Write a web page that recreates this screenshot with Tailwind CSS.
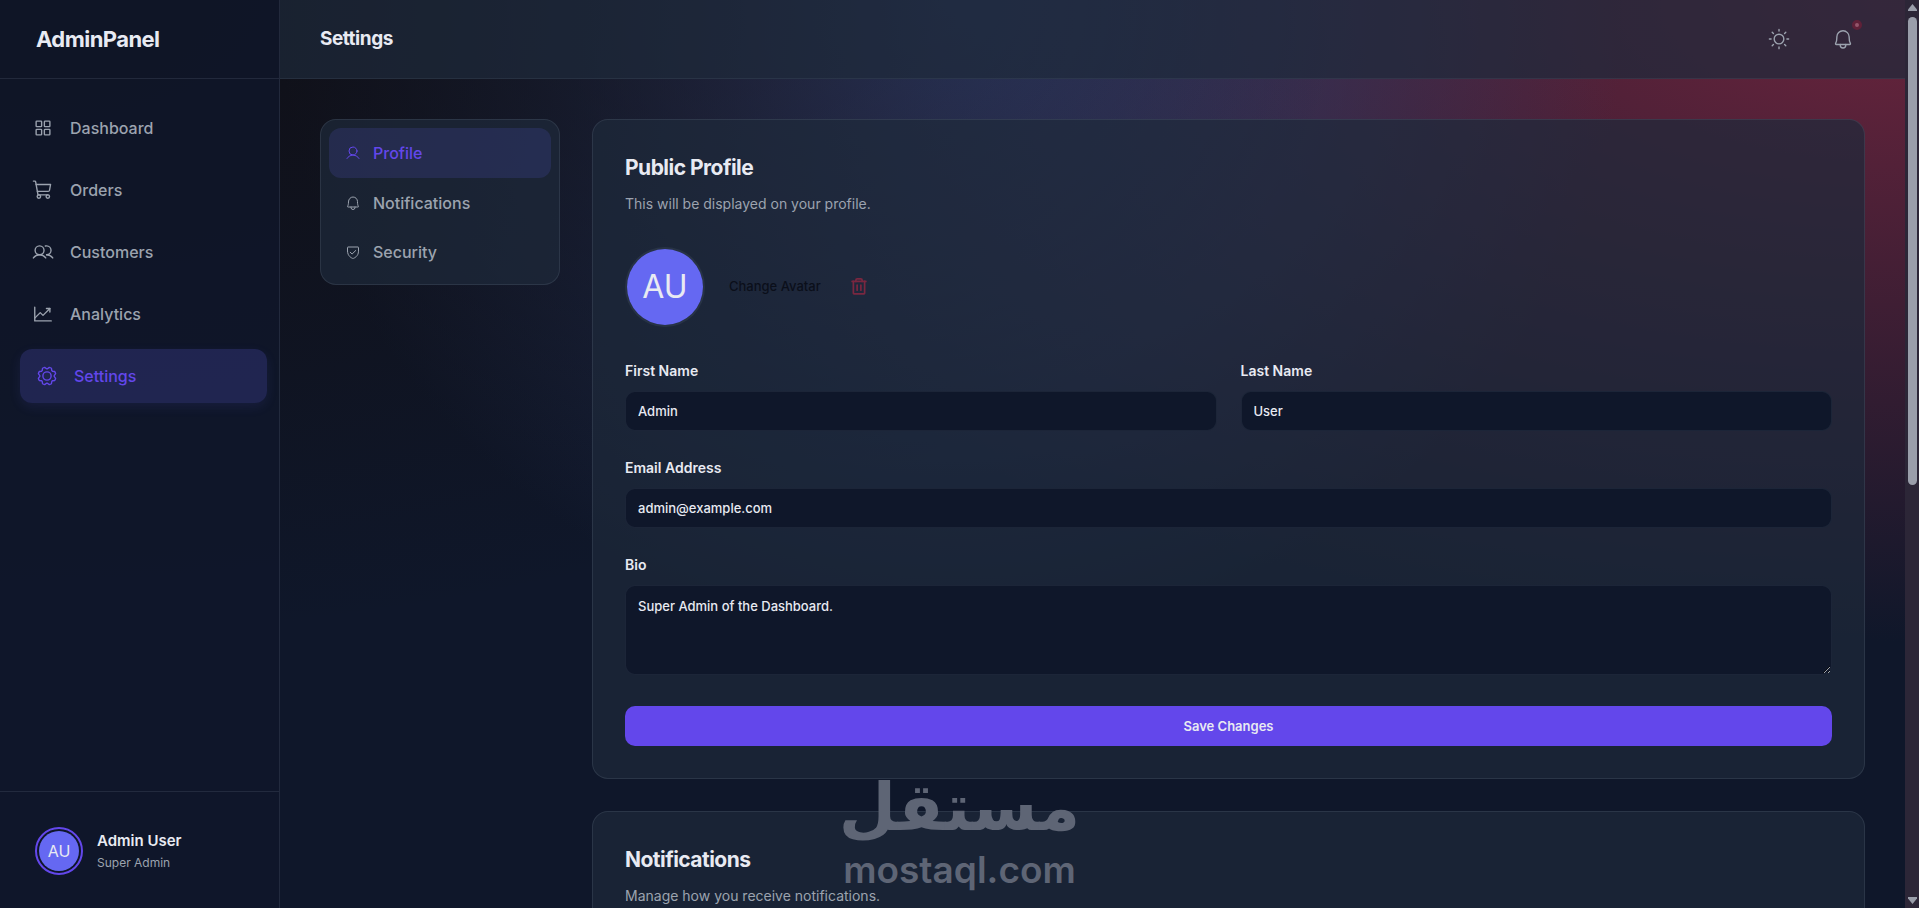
<!DOCTYPE html>
<html lang="en">
<head>
    <meta charset="UTF-8">
    <meta name="viewport" content="width=device-width, initial-scale=1.0">
    <script src="https://cdn.jsdelivr.net/npm/@tailwindcss/browser@4"></script>
    <title>AdminPanel - Settings</title>
</head>
<body class="h-screen overflow-hidden flex bg-[#0f172a] text-[#e8eaf2] font-['Inter',sans-serif]">
    <!-- icon sprite -->
    <svg class="hidden">
        <symbol id="i-grid" viewBox="0 0 256 256">
            <rect x="48" y="48" width="64" height="64" rx="8"/><rect x="144" y="48" width="64" height="64" rx="8"/>
            <rect x="48" y="144" width="64" height="64" rx="8"/><rect x="144" y="144" width="64" height="64" rx="8"/>
        </symbol>
        <symbol id="i-cart" viewBox="0 0 256 256">
            <path d="M184,184H69.8L41.9,30.6A8,8,0,0,0,34.1,24H16"/>
            <circle cx="80" cy="204" r="20"/><circle cx="184" cy="204" r="20"/>
            <path d="M62.5,144H188.1a15.9,15.9,0,0,0,15.7-13.1L216,64H48"/>
        </symbol>
        <symbol id="i-users" viewBox="0 0 256 256">
            <circle cx="88" cy="108" r="52"/>
            <path d="M155.4,57.9A54.5,54.5,0,0,1,169.5,56a52,52,0,0,1,0,104"/>
            <path d="M16,197.4a88,88,0,0,1,144,0"/><path d="M169.5,160a87.9,87.9,0,0,1,72,37.4"/>
        </symbol>
        <symbol id="i-chart" viewBox="0 0 256 256">
            <polyline points="224 208 32 208 32 48"/><polyline points="208 64 128 144 96 112 32 176"/><polyline points="208 104 208 64 168 64"/>
        </symbol>
        <symbol id="i-gear" viewBox="0 0 256 256">
            <circle cx="128" cy="128" r="48"/>
            <path d="M183.7,65.1q3.8,3.5,7.2,7.2l27.3,3.9a103.2,103.2,0,0,1,10.2,24.6l-16.6,22.1s.3,6.8,0,10.2l16.6,22.1a102.2,102.2,0,0,1-10.2,24.6l-27.3,3.9s-4.7,4.9-7.2,7.2l-3.9,27.3a103.2,103.2,0,0,1-24.6,10.2l-22.1-16.6a57.9,57.9,0,0,1-10.2,0l-22.1,16.6a102.2,102.2,0,0,1-24.6-10.2l-3.9-27.3q-3.7-3.5-7.2-7.2l-27.3-3.9a103.2,103.2,0,0,1-10.2-24.6l16.6-22.1s-.3-6.8,0-10.2L27.6,100.8A102.2,102.2,0,0,1,37.8,76.2l27.3-3.9q3.5-3.7,7.2-7.2L76.2,37.8a103.2,103.2,0,0,1,24.6-10.2l22.1,16.6a57.9,57.9,0,0,1,10.2,0l22.1-16.6a102.2,102.2,0,0,1,24.6,10.2Z"/>
        </symbol>
        <symbol id="i-user" viewBox="0 0 256 256">
            <circle cx="128" cy="96" r="64"/><path d="M31,216a112,112,0,0,1,194,0"/>
        </symbol>
        <symbol id="i-bell" viewBox="0 0 256 256">
            <path d="M56.2,104a71.9,71.9,0,0,1,72.3-72c39.6.3,71.3,33.2,71.3,72.9V112c0,35.8,7.5,56.6,14.1,68a8,8,0,0,1-6.9,12H49a8,8,0,0,1-6.9-12c6.6-11.4,14.1-32.2,14.1-68Z"/>
            <path d="M96,192v8a32,32,0,0,0,64,0v-8"/>
        </symbol>
        <symbol id="i-shield" viewBox="0 0 256 256">
            <path d="M40,114.7V56a8,8,0,0,1,8-8H208a8,8,0,0,1,8,8v58.7c0,84-71.3,111.8-85.5,116.5a7.2,7.2,0,0,1-5,0C111.3,226.5,40,198.7,40,114.7Z"/>
            <polyline points="172 104 113.3 160 84 132"/>
        </symbol>
        <symbol id="i-trash" viewBox="0 0 256 256">
            <path d="M216,56H40M104,104v64M152,104v64"/>
            <path d="M200,56V208a8,8,0,0,1-8,8H64a8,8,0,0,1-8-8V56"/>
            <path d="M168,56V40a16,16,0,0,0-16-16H104A16,16,0,0,0,88,40V56"/>
        </symbol>
        <symbol id="i-sun" viewBox="0 0 256 256">
            <circle cx="128" cy="128" r="56"/>
            <path d="M128,36V16M128,240V220M36,128H16M240,128H220M63,63L49,49M193,63L207,49M63,193L49,207M193,193L207,207"/>
        </symbol>
    </svg>

    <div class="flex-1 min-w-0 flex bg-[radial-gradient(at_0%_0%,hsla(253,16%,7%,1)_0,transparent_50%),radial-gradient(at_50%_0%,hsla(225,39%,30%,1)_0,transparent_50%),radial-gradient(at_100%_0%,hsla(339,49%,28%,1)_0,transparent_50%)]">
        <!-- sidebar -->
        <aside class="w-[280px] shrink-0 flex flex-col bg-[#0f172a]/80 border-r border-[#94a3b8]/15">
            <div class="h-[79px] shrink-0 flex items-center px-9 border-b border-[#94a3b8]/15">
                <span class="text-[22px] font-bold tracking-tight">AdminPanel</span>
            </div>
            <nav class="flex-1 flex flex-col gap-2 px-4 pt-[22px] text-base font-medium text-[#9ca3af]">
                <a href="#" class="h-[54px] px-4 flex items-center gap-4"><svg class="size-[22px] fill-none stroke-current stroke-[16] [stroke-linecap:round] [stroke-linejoin:round]"><use href="#i-grid"/></svg>Dashboard</a>
                <a href="#" class="h-[54px] px-4 flex items-center gap-4"><svg class="size-[22px] fill-none stroke-current stroke-[16] [stroke-linecap:round] [stroke-linejoin:round]"><use href="#i-cart"/></svg>Orders</a>
                <a href="#" class="h-[54px] px-4 flex items-center gap-4"><svg class="size-[22px] fill-none stroke-current stroke-[16] [stroke-linecap:round] [stroke-linejoin:round]"><use href="#i-users"/></svg>Customers</a>
                <a href="#" class="h-[54px] px-4 flex items-center gap-4"><svg class="size-[22px] fill-none stroke-current stroke-[16] [stroke-linecap:round] [stroke-linejoin:round]"><use href="#i-chart"/></svg>Analytics</a>
                <a href="#" class="h-[54px] px-4 flex items-center gap-4 translate-x-1 rounded-xl bg-[#6366f1]/20 text-[#6347eb] shadow-[0_4px_12px_rgba(99,102,241,0.1)]"><svg class="size-[22px] fill-none stroke-current stroke-[16] [stroke-linecap:round] [stroke-linejoin:round]"><use href="#i-gear"/></svg>Settings</a>
            </nav>
            <div class="h-[117px] shrink-0 flex items-center gap-[14px] px-[35px] pt-0.5 border-t border-[#94a3b8]/15">
                <div class="size-12 shrink-0 p-0.5 rounded-full border-2 border-[#6347eb]">
                    <div class="size-10 rounded-full bg-[#6568f2] flex items-center justify-center text-base">AU</div>
                </div>
                <div>
                    <p class="text-[15px] leading-6 font-semibold">Admin User</p>
                    <p class="text-xs leading-5 text-[#9ca3af]">Super Admin</p>
                </div>
            </div>
        </aside>

        <div class="flex-1 min-w-0 flex flex-col">
            <header class="h-[79px] shrink-0 flex items-center justify-between px-10 bg-[#1e293b]/70 border-b border-[#94a3b8]/10">
                <h1 class="text-[19px] font-bold tracking-tight">Settings</h1>
                <div class="flex gap-5 text-[#9ca3af]">
                    <button aria-label="Toggle theme" class="size-11 flex items-center justify-center"><svg class="size-[22px] fill-none stroke-current stroke-[16] [stroke-linecap:round] [stroke-linejoin:round]"><use href="#i-sun"/></svg></button>
                    <button aria-label="Notifications" class="relative size-11 flex items-center justify-center">
                        <svg class="size-[22px] fill-none stroke-current stroke-[16] [stroke-linecap:round] [stroke-linejoin:round]"><use href="#i-bell"/></svg>
                        <span class="absolute top-[3px] right-[3px] size-[10px] rounded-full bg-[#93566b] border-[3px] border-[#5f2138]"></span>
                    </button>
                </div>
            </header>

            <main class="flex-1 min-h-0 overflow-hidden flex items-start gap-8 p-10">
                <nav class="w-60 shrink-0 p-2 rounded-2xl bg-[#1e293b]/70 border border-[#94a3b8]/15 text-base font-medium text-[#9ca3af]">
                    <a href="#profile" class="h-[50px] px-4 flex items-center gap-3 rounded-xl bg-[#6366f1]/15 text-[#6347eb]"><svg class="size-4 fill-none stroke-current stroke-[16] [stroke-linecap:round] [stroke-linejoin:round]"><use href="#i-user"/></svg>Profile</a>
                    <a href="#notifications" class="h-[49px] px-4 flex items-center gap-3"><svg class="size-4 fill-none stroke-current stroke-[16] [stroke-linecap:round] [stroke-linejoin:round]"><use href="#i-bell"/></svg>Notifications</a>
                    <a href="#security" class="h-[49px] px-4 flex items-center gap-3"><svg class="size-4 fill-none stroke-current stroke-[16] [stroke-linecap:round] [stroke-linejoin:round]"><use href="#i-shield"/></svg>Security</a>
                </nav>

                <div class="flex-1 min-w-0 flex flex-col gap-8">
                    <section id="profile" class="p-8 rounded-2xl bg-[#1e293b]/70 border border-[#94a3b8]/15">
                        <h2 class="text-[21px] leading-8 font-bold tracking-tight">Public Profile</h2>
                        <p class="mt-2 text-sm leading-[23px] text-[#9ca3af]">This will be displayed on your profile.</p>
                        <div class="mt-8 flex items-center gap-6">
                            <div class="size-20 rounded-full bg-[#6568f2] bg-clip-padding border-2 border-[#94a3b8]/10 flex items-center justify-center text-[32px]">AU</div>
                            <div class="flex items-center gap-7">
                                <button class="text-[13px] font-medium text-[#0b0f1a]">Change Avatar</button>
                                <button aria-label="Delete avatar" class="text-[#7a2740]"><svg class="size-5 fill-none stroke-current stroke-[22] [stroke-linecap:round] [stroke-linejoin:round]"><use href="#i-trash"/></svg></button>
                            </div>
                        </div>
                        <form class="mt-8 flex flex-col gap-[25px] text-sm">
                            <div class="grid grid-cols-2 gap-6">
                                <div class="flex flex-col gap-2">
                                    <label for="first" class="leading-6 font-semibold">First Name</label>
                                    <input id="first" type="text" value="Admin" class="h-10 px-3 rounded-[10px] bg-[#0f172a] border border-[#94a3b8]/10 font-medium text-[13px]">
                                </div>
                                <div class="flex flex-col gap-2">
                                    <label for="last" class="leading-6 font-semibold">Last Name</label>
                                    <input id="last" type="text" value="User" class="h-10 px-3 rounded-[10px] bg-[#0f172a] border border-[#94a3b8]/10 font-medium text-[13px]">
                                </div>
                            </div>
                            <div class="flex flex-col gap-2">
                                <label for="email" class="leading-6 font-semibold">Email Address</label>
                                <input id="email" type="email" value="admin@example.com" class="h-10 px-3 rounded-[10px] bg-[#0f172a] border border-[#94a3b8]/10 font-medium text-[13px]">
                            </div>
                            <div class="flex flex-col gap-2">
                                <label for="bio" class="leading-6 font-semibold">Bio</label>
                                <textarea id="bio" class="h-[90px] px-3 py-3 rounded-[10px] bg-[#0f172a] border border-[#94a3b8]/10 font-medium text-[13px] leading-4">Super Admin of the Dashboard.</textarea>
                            </div>
                            <button type="button" class="mt-1.5 h-10 rounded-[10px] bg-[#6347eb] text-[13px] font-semibold">Save Changes</button>
                        </form>
                    </section>

                    <section id="notifications" class="p-8 rounded-2xl bg-[#1e293b]/70 border border-[#94a3b8]/15">
                        <h2 class="text-[21px] leading-8 font-bold tracking-tight">Notifications</h2>
                        <p class="mt-2 text-sm leading-[23px] text-[#9ca3af]">Manage how you receive notifications.</p>
                    </section>
                </div>
            </main>
        </div>
    </div>

    <!-- page scrollbar -->
    <div class="w-[14px] shrink-0 flex flex-col items-center bg-[#2c2637] py-1" aria-hidden="true">
        <svg class="w-[9px] h-[7px] fill-[#9a9eaa]" viewBox="0 0 9 7"><path d="M4.5 0L9 5.5V7H0V5.5Z"/></svg>
        <div class="mt-1.5 h-[52%] w-[9px] rounded-full bg-[#9a9eaa]"></div>
        <svg class="mt-auto w-[9px] h-[7px] fill-[#9a9eaa]" viewBox="0 0 9 7"><path d="M4.5 7L9 1.5V0H0V1.5Z"/></svg>
    </div>

    <!-- watermark -->
    <div class="absolute inset-x-0 bottom-4 flex flex-col items-center text-[#5e6575] font-semibold pointer-events-none">
        <span lang="ar" dir="rtl" class="text-[66px] leading-[80px] font-bold font-['DejaVu_Sans',sans-serif]">مستقل</span>
        <span class="text-[37px] leading-[44px]">mostaql.com</span>
    </div>
</body>
</html>
